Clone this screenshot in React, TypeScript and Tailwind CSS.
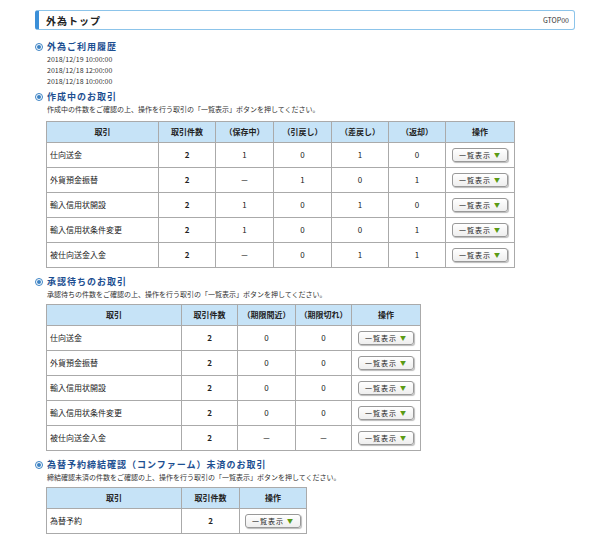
import React from "react";

const F = { fontFamily: '"Noto Sans CJK JP","Liberation Sans",sans-serif' };

function Btn() {
  return (
    <div className="inline-flex items-center gap-[3px] h-[14px] px-[6px] border border-[#999] rounded-[3px] bg-gradient-to-b from-white to-[#eee] shadow-[1px_1px_1px_#bbb] text-[7px] leading-none text-[#222] tracking-[1px]">
      <span>一覧表示</span>
      <span className="text-[#5a9a14] text-[6px]">▼</span>
    </div>
  );
}

function Heading({ t }: { t: string }) {
  return (
    <div className="flex items-center gap-[4px] h-[14px] text-[9px] font-bold text-[#1d4f91] tracking-[1px]">
      <span className="w-[8px] h-[8px] rounded-full border border-[#3b82c4] flex items-center justify-center bg-white">
        <span className="w-[4px] h-[4px] rounded-full bg-[#3b82c4]" />
      </span>
      {t}
    </div>
  );
}

function Table({ cols, widths, rows }: { cols: string[]; widths: number[]; rows: string[][] }) {
  return (
    <table className="border-collapse ml-[11px] text-[8px] text-[#222]">
      <thead>
        <tr className="h-[21px]">
          {cols.map((c, i) => (
            <th key={i} style={{ width: widths[i] }} className="border border-[#aaa] bg-[#c6e3f7] font-bold text-[8px]">{c}</th>
          ))}
        </tr>
      </thead>
      <tbody>
        {rows.map((r, ri) => (
          <tr key={ri} className="h-[25px]">
            {r.map((v, i) => (
              <td key={i} className={`border border-[#aaa] ${i === 0 ? "text-left pl-[3px]" : "text-center"} ${i === 1 ? "font-bold" : ""}`}>{v}</td>
            ))}
            <td className="border border-[#aaa] text-center"><Btn /></td>
          </tr>
        ))}
      </tbody>
    </table>
  );
}

export default function App() {
  return (
    <div style={F} className="w-[600px] h-[546px] bg-white pl-[35px] pr-[25px] pt-[10px]">
      <div className="flex items-center justify-between h-[20px] border border-[#8cc4ea] border-l-[4px] border-l-[#3b8fd8] rounded-[3px] pl-[7px] pr-[5px]">
        <span className="text-[10px] font-bold text-[#222] tracking-[1px]">外為トップ</span>
        <span className="text-[7px] text-[#333]">GTOP00</span>
      </div>
      <div className="mt-[10px]"><Heading t="外為ご利用履歴" /></div>
      <div className="pl-[12px] text-[7px] leading-[11px] text-[#333]">
        <div>2018/12/19 10:00:00</div>
        <div>2018/12/18 12:00:00</div>
        <div>2018/12/18 10:00:00</div>
      </div>
      <div className="mt-[3px]"><Heading t="作成中のお取引" /></div>
      <div className="pl-[12px] text-[7px] leading-[11px] text-[#333] mb-[6px]">作成中の件数をご確認の上、操作を行う取引の「一覧表示」ボタンを押してください。</div>
      <Table
        cols={["取引", "取引件数", "（保存中）", "（引戻し）", "（差戻し）", "（返却）", "操作"]}
        widths={[112, 57, 58, 58, 57, 57, 69]}
        rows={[
          ["仕向送金", "2", "1", "0", "1", "0"],
          ["外貨預金振替", "2", "－", "1", "0", "1"],
          ["輸入信用状開設", "2", "1", "0", "1", "0"],
          ["輸入信用状条件変更", "2", "1", "0", "0", "1"],
          ["被仕向送金入金", "2", "－", "0", "1", "1"],
        ]}
      />
      <div className="mt-[7px]"><Heading t="承認待ちのお取引" /></div>
      <div className="pl-[12px] text-[7px] leading-[11px] text-[#333] mb-[4px]">承認待ちの件数をご確認の上、操作を行う取引の「一覧表示」ボタンを押してください。</div>
      <Table
        cols={["取引", "取引件数", "（期限間近）", "（期限切れ）", "操作"]}
        widths={[135, 56, 58, 56, 69]}
        rows={[
          ["仕向送金", "2", "0", "0"],
          ["外貨預金振替", "2", "0", "0"],
          ["輸入信用状開設", "2", "0", "0"],
          ["輸入信用状条件変更", "2", "0", "0"],
          ["被仕向送金入金", "2", "－", "－"],
        ]}
      />
      <div className="mt-[7px]"><Heading t="為替予約締結確認（コンファーム）未済のお取引" /></div>
      <div className="pl-[12px] text-[7px] leading-[11px] text-[#333] mb-[4px]">締結確認未済の件数をご確認の上、操作を行う取引の「一覧表示」ボタンを押してください。</div>
      <Table cols={["取引", "取引件数", "操作"]} widths={[135, 58, 67]} rows={[["為替予約", "2"]]} />
    </div>
  );
}
